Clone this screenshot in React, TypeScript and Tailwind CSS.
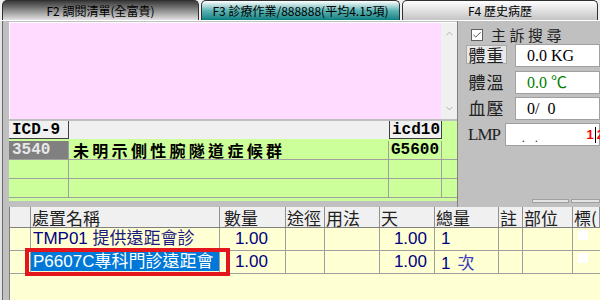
import { Check, ChevronDown, ChevronUp } from "lucide-react";

const cjk = "font-['Noto_Sans_CJK_TC',sans-serif]";
const sans = "font-['Liberation_Sans','Noto_Sans_CJK_TC',sans-serif]";
const serif = "font-['Liberation_Serif','Noto_Sans_CJK_TC',serif]";
const mono = "font-['Liberation_Mono','Noto_Sans_CJK_TC',monospace]";

const cols = [21, 189, 66, 39, 55, 55, 64, 24, 50, 27];
const headers = ["", "處置名稱", "數量", "途徑", "用法", "天", "總量", "註", "部位", "標("];

function Tabs () {
  return (
    <div className={`flex h-[20px] items-end gap-[2px] bg-[#f0f0f0] px-[2px] text-[12px] text-black ${cjk}`}>
      <div className="flex h-[20px] w-[197px] items-center justify-center rounded-t-[5px] border border-b-0 border-[#303030] bg-linear-to-b from-[#3a3a3a] via-[#8e8e8e] to-[#e2e2e2]">
        F2 調閱清單(全富貴)
      </div>
      <div className="flex h-[20px] w-[199px] items-center justify-center rounded-t-[5px] border border-b-0 border-[#303030] bg-linear-to-b from-[#ffffff] via-[#5cb5b5] to-[#008080]">
        F3 診療作業/888888(平均4.15項)
      </div>
      <div className="flex h-[20px] w-[196px] items-center justify-center rounded-t-[5px] border border-b-0 border-[#303030] bg-linear-to-b from-[#ffffff] to-[#c4c4c4]">
        F4 歷史病歷
      </div>
    </div>
  );
}

function IcdTable () {
  return (
    <div className="mt-[2px] h-[80px] bg-[#ccff99]">
      {/* header */}
      <div className="flex h-[18px]">
        <div className={`flex w-[60px] items-center border-r border-b border-[#404040] bg-[#f0f0f0] pl-[3px] text-[16px] font-bold ${mono}`}>ICD-9</div>
        <div className="w-[320px] bg-[#f0f0f0]" />
        <div className={`flex w-[53px] items-center border-x border-b border-[#404040] bg-[#f0f0f0] pl-[2px] text-[16px] font-bold ${mono}`}>icd10</div>
        <div className="flex-1" />
      </div>
      <div className="h-[2px]" />
      {/* rows */}
      {[0, 1, 2].map((i) => (
        <div key={i} className="flex h-[19px] border-b border-[#a0a0a0]">
          <div className={`flex w-[60px] items-center border-r border-[#a0a0a0] pl-[3px] text-[16px] font-bold ${mono} ${i === 0 ? "bg-[#808080] text-[#e8e8e8]" : ""}`}>
            {i === 0 ? "3540" : ""}
          </div>
          <div className={`flex w-[320px] items-center border-r border-[#a0a0a0] pl-[4px] text-[16px] font-bold tracking-[3.3px] text-black ${cjk}`}>
            {i === 0 ? "未明示側性腕隧道症候群" : ""}
          </div>
          <div className={`flex w-[53px] items-center border-r border-[#a0a0a0] pl-[2px] text-[16px] font-bold ${mono}`}>
            {i === 0 ? "G5600" : ""}
          </div>
          <div className="flex-1" />
        </div>
      ))}
    </div>
  );
}

function Field ({ label, button, value, green }: { label: string; button?: boolean; value: string; green?: boolean }) {
  return (
    <div className="flex h-[23px] items-center">
      <div className="w-[57px] pl-[8px]">
        <span className={`inline-flex h-[19px] w-[41px] items-center justify-center text-[17px] tracking-[1px] text-[#202020] ${cjk} ${button ? "border border-[#a8a8a8] bg-[#e8e8e8]" : ""}`}>
          {label}
        </span>
      </div>
      <div className={`flex h-[23px] flex-1 items-center whitespace-pre border border-[#a0a0a0] bg-white pl-[11px] text-[16px] ${serif} ${green ? "text-[#008000]" : "text-black"}`}>
        {value}
      </div>
    </div>
  );
}

function SidePanel () {
  return (
    <div className="flex w-[143px] flex-col border-l border-[#808080] bg-[#c0c0c0]">
      <div className="mt-[6px] flex h-[16px] items-center pl-[13px]">
        <span className="flex h-[12px] w-[12px] items-center justify-center border border-[#606060] bg-white">
          <Check size={10} strokeWidth={2} color="#303030" />
        </span>
        <span className={`ml-[8px] text-[15px] tracking-[3.5px] text-[#202020] ${cjk}`}>主訴搜尋</span>
      </div>
      <div className="mt-[1px] flex flex-col">
        <Field label="體重" button value="0.0 KG" />
        <div className="h-[4px]" />
        <Field label="體溫" value="0.0 ℃" green />
        <div className="h-[3px]" />
        <Field label="血壓" value="0/  0" />
        <div className="h-[3px]" />
        <div className="flex h-[23px] items-center">
          <div className={`w-[47px] pl-[10px] text-[17px] tracking-[-1px] text-[#202020] ${serif}`}>LMP</div>
          <div className="relative h-[23px] flex-1 border border-[#a0a0a0] bg-white">
            <span className="absolute left-[16px] top-[9px] text-[10px] leading-none">.</span>
            <span className="absolute left-[29px] top-[9px] text-[10px] leading-none">.</span>
            <span className={`absolute right-[-5px] top-[2px] flex items-center text-[13px] font-bold leading-[17px] text-[#ff0000] ${sans}`}>
              1<span className="mx-[1px] h-[16px] w-[1px] bg-black" />2
            </span>
          </div>
        </div>
      </div>
      <div className="mt-auto mb-[4px] flex justify-end gap-[2px]">
        <div className="h-[4px] w-[37px] border border-[#a0a0a0] bg-[#e4e4e4]" />
        <div className="h-[4px] w-[29px] border border-[#a0a0a0] bg-[#e4e4e4]" />
      </div>
    </div>
  );
}

function OrderTable () {
  const rows = [
    { code: "TMP01", name: " 提供遠距會診", qty: "1.00", days: "1.00", total: "1", unit: "" },
    { code: "P6607C", name: "專科門診遠距會", qty: "1.00", days: "1.00", total: "1", unit: "次" }
  ];
  return (
    <div className="flex-1 border-l border-[#808080] bg-[#ffffd4]">
      <div className={`flex h-[21px] border-b border-[#808080] bg-[#f0f0f0] text-[17px] leading-[21px] text-[#202020] ${cjk}`}>
        {headers.map((h, i) => (
          <div
            key={i}
            style={{ width: cols[i] }}
            className={`shrink-0 whitespace-nowrap border-r border-[#909090] ${i === 2 ? "pl-[4px]" : "pl-[1px]"} ${i === 9 ? "overflow-hidden" : ""}`}
          >
            {h}
          </div>
        ))}
      </div>
      {rows.map((r, ri) => (
        <div key={ri} className={`flex h-[23px] border-b border-[#a0a0a0] text-[17px] leading-[22px] text-[#000080] ${sans}`}>
          <div style={{ width: cols[0] }} className="shrink-0 border-r border-[#a0a0a0]" />
          <div style={{ width: cols[1] }} className="relative shrink-0 border-r border-[#a0a0a0]">
            {ri === 1 ? (
              <>
                <div className="absolute inset-x-0 top-[1px] bottom-[2px] overflow-hidden whitespace-nowrap bg-[#0078d7] pl-[2px] leading-[19px] text-white">
                  {r.code}{r.name}
                </div>
                <div className="absolute left-[-6px] top-[-3px] h-[28px] w-[205px] border-[4px] border-[#e3161e]" />
              </>
            ) : (
              <div className="whitespace-pre pl-[2px]">
                {r.code}<span className="text-[#1c1c80]">{r.name}</span>
              </div>
            )}
          </div>
          <div style={{ width: cols[2] }} className="shrink-0 border-r border-[#a0a0a0] pr-[17px] text-right">{r.qty}</div>
          <div style={{ width: cols[3] }} className="shrink-0 border-r border-[#a0a0a0]" />
          <div style={{ width: cols[4] }} className="shrink-0 border-r border-[#a0a0a0]" />
          <div style={{ width: cols[5] }} className="shrink-0 border-r border-[#a0a0a0] pr-[7px] text-right">{r.days}</div>
          <div style={{ width: cols[6] }} className="shrink-0 border-r border-[#a0a0a0] pl-[6px]">
            {r.total}
            {r.unit && <span className={`ml-[7px] text-[#3c3cc0] ${cjk}`}>{r.unit}</span>}
          </div>
          <div style={{ width: cols[7] }} className="shrink-0 border-r border-[#a0a0a0]" />
          <div style={{ width: cols[8] }} className="shrink-0 border-r border-[#a0a0a0]" />
          <div style={{ width: cols[9] }} className="shrink-0 pl-[5px] pt-[2px]">
            <div className="h-[10px] w-[10px] bg-white" />
          </div>
        </div>
      ))}
    </div>
  );
}

export default function App () {
  return (
    <div className="h-[300px] w-[600px] overflow-hidden bg-[#c0c0c0]">
      <Tabs />
      <div className="flex h-[280px] border-t border-[#ffffff]">
        {/* left frame strip */}
        <div className="flex w-[9px] shrink-0">
          <div className="w-[2px] bg-[#e4e4e4]" />
          <div className="w-[1px] bg-[#6a6a6a]" />
          <div className="flex-1 bg-[#c0c0c0]" />
        </div>

        <div className="flex flex-1 flex-col">
          <div className="flex h-[186px]">
            <div className="flex w-[448px] flex-col">
              {/* note area */}
              <div className="mt-[1px] flex h-[97px] border-t border-l border-white">
                <div className="flex-1 bg-[#ffdcff]" />
                <div className="flex w-[16px] flex-col items-center justify-between bg-[#f0f0f0] py-[5px]">
                  <ChevronUp size={11} color="#a8a8a8" strokeWidth={2} />
                  <ChevronDown size={11} color="#a8a8a8" strokeWidth={2} />
                </div>
              </div>
              <IcdTable />
            </div>
            <SidePanel />
          </div>
          <OrderTable />
        </div>
      </div>
    </div>
  );
}
